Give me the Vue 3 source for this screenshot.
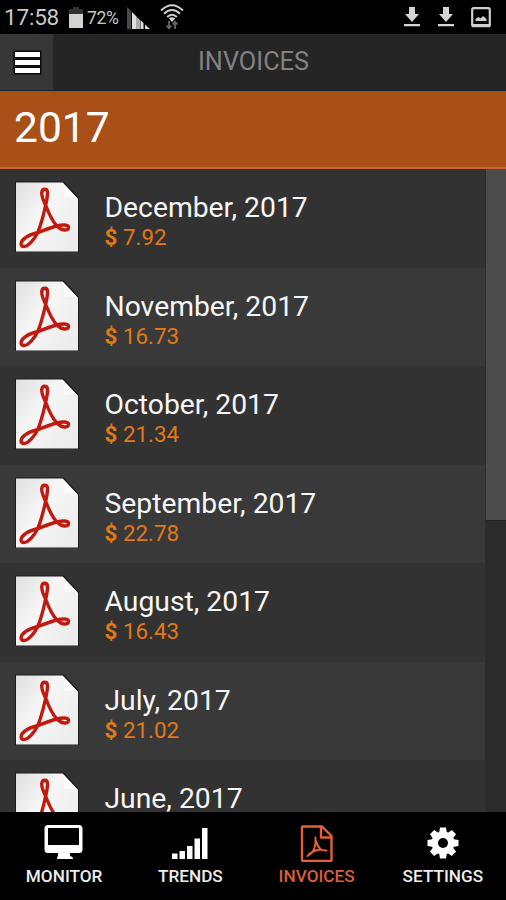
<script setup>
const invoices = [
  { month: 'December, 2017', amount: '7.92' },
  { month: 'November, 2017', amount: '16.73' },
  { month: 'October, 2017', amount: '21.34' },
  { month: 'September, 2017', amount: '22.78' },
  { month: 'August, 2017', amount: '16.43' },
  { month: 'July, 2017', amount: '21.02' },
  { month: 'June, 2017', amount: '' },
]
</script>

<template>
  <div class="phone">
    <div class="status">
      <span class="clock">17:58</span>
      <svg class="battery" width="14" height="22" viewBox="0 0 14 22">
        <path d="M4 0h6v2h4v5H0V2h4z" fill="#333" />
        <path d="M0 7h14v14H0z" fill="#d2d2d2" />
      </svg>
      <span class="percent">72%</span>
      <svg class="cell" width="23" height="22" viewBox="0 0 23 22">
        <path d="M0 0l4 4v18H0z" fill="#484848" />
        <path d="M5 5l4 4v13H5z" fill="#ddd" />
        <path d="M9 9l4 4v9H9z" fill="#aaa" />
        <path d="M13.500 13l3 3v6h-3zM18 17.500l5 4.500h-5z" fill="#ddd" />
      </svg>
      <svg class="wifi" width="24" height="26" viewBox="0 0 24 26">
        <g fill="none" stroke="#d0d0d0" stroke-width="2">
          <path d="M1 6.500q11-10.500 22 0M4 9.800q8-7.600 16 0M7.200 13q4.800-4.600 9.600 0" />
        </g>
        <path d="M8.800 14.500q3.200-2.500 6.400 0L12 18z" fill="#d0d0d0" />
        <path d="M9 17v7M6.500 21.500L9 24.300l2.300-2.800M15 25v-7M12.700 20.500L15 17.700l2.500 2.800" fill="none" stroke="#686868" stroke-width="1.800" />
      </svg>
      <span class="spacer"></span>
      <svg v-for="n in 2" :key="n" class="download" width="16" height="20" viewBox="0 0 16 20">
        <path d="M5 0h6v7h4l-7 8-7-8h4zM0 17h16v2.300H0z" fill="#d4d4d4" />
      </svg>
      <svg class="picture" width="20" height="21" viewBox="0 0 20 21">
        <rect x="1.200" y="1.200" width="17.600" height="18" rx="1.500" fill="none" stroke="#cfcfcf" stroke-width="2.200" />
        <path d="M2 17h16v2H2z" fill="#cfcfcf" />
        <path d="M4.500 14v-2l3-2 2 1.400L12 9l3.500 3v2z" fill="#cfcfcf" />
      </svg>
    </div>

    <header class="header">
      <button class="menu" aria-label="Menu"><i></i><i></i><i></i></button>
      <h1 class="title">INVOICES</h1>
    </header>

    <div class="year">2017</div>

    <div class="content">
      <div class="list">
        <div v-for="inv in invoices" :key="inv.month" class="row">
          <svg class="file" width="64" height="72" viewBox="0 0 64 72">
            <defs>
              <linearGradient id="paper" x1="0" y1="0" x2="1" y2="0.8">
                <stop offset="0" stop-color="#dfdfdf" />
                <stop offset="0.450" stop-color="#f6f6f6" />
                <stop offset="1" stop-color="#ececec" />
              </linearGradient>
            </defs>
            <path d="M0 .5h49l15 16.500v54H0z" fill="#1c1c1c" />
            <path d="M1 1.500h46.500l15.500 16.500v52.500H1z" fill="url(#paper)" />
            <path d="M47.500 1.500L63 18q-8-3-14-1 1-8-1.500-15.500z" fill="#fcfcfc" />
            <path fill="none" stroke="#c01a10" stroke-width="3.400" stroke-linejoin="round" d="M31 25C28 19 26.500 15 26.800 12C27 7 32.500 7 32.500 12C32.500 17 31.500 21 30 27C28 36 26 44 22.500 52C19 59 13 65.500 9 65.500C4.500 65.500 5.500 60 10 57C14 54 19 52.500 23 51.500C31 48.500 36 46.500 42 45C47 43.500 53.500 43.500 53.500 46.500C53.500 50 46 50 42 45C37 40 34 33 31 25z" />
          </svg>
          <div class="text">
            <div class="month">{{ inv.month }}</div>
            <div v-if="inv.amount" class="amount"><b>$</b> {{ inv.amount }}</div>
          </div>
        </div>
      </div>
      <div class="track"><div class="thumb"></div></div>
    </div>

    <nav class="tabs">
      <a class="tab">
        <svg width="40" height="38" viewBox="0 0 40 38">
          <path fill-rule="evenodd" fill="#fff" d="M4 1h31q3.500 0 3.500 3.500v21q0 3.500-3.500 3.500h-9v3q3 .5 3 3H13q0-2.500 1-3v-3H4q-3.500 0-3.500-3.500v-21Q.5 1 4 1zM4 4v17h31V4z" />
        </svg>
        <span>MONITOR</span>
      </a>
      <a class="tab">
        <svg width="40" height="38" viewBox="0 0 40 38">
          <path fill="#fff" d="M2 29.500h5.500V35H2zM9.500 27H15v8H9.500zM17 22h5.500v13H17zM24.500 14.500H30V35h-5.500zM32 4h5.500v31H32z" />
        </svg>
        <span>TRENDS</span>
      </a>
      <a class="tab active">
        <svg width="40" height="38" viewBox="0 0 40 38">
          <g fill="none" stroke="#e4603a">
            <path stroke-width="2.400" stroke-linejoin="round" d="M6 2.500h19l9.500 9.500v24q0 1-1 1H6q-1 0-1-1V3.500q0-1 1-1zM24 3v10.500h10.500" />
            <path stroke-width="2" stroke-linecap="round" stroke-linejoin="round" d="M18.500 13.500q.5 7-1.500 12-2 4-6.500 6.500M19 17q1 5 4.500 8 3 2 6 1.500M11.500 30.500q5.500-4.500 13-5" />
          </g>
        </svg>
        <span>INVOICES</span>
      </a>
      <a class="tab">
        <svg width="40" height="38" viewBox="0 0 40 38">
          <g fill="#fff" transform="translate(20 19)">
            <g v-for="a in [0, 45, 90, 135]" :key="a" :transform="`rotate(${a})`">
              <path d="M-3-15.500h6l1 6v19l-1 6h-6l-1-6v-19z" />
            </g>
            <circle r="11.500" />
            <circle r="5" fill="#000" />
          </g>
        </svg>
        <span>SETTINGS</span>
      </a>
    </nav>
  </div>
</template>

<style>
body { margin: 0; background: #000; }
</style>

<style scoped>
.phone {
  width: 506px;
  height: 900px;
  display: flex;
  flex-direction: column;
  overflow: hidden;
  background: #000;
  font-family: Roboto, "Liberation Sans", sans-serif;
}
.status {
  flex: none;
  height: 34px;
  box-sizing: border-box;
  display: flex;
  align-items: center;
  padding: 0 15px 0 4px;
  color: #c9c9c9;
}
.clock { width: 65px; font-size: 22.500px; letter-spacing: -0.2px; line-height: 34px; }
.battery { margin-top: 1px; }
.percent { width: 40px; margin-left: 4px; padding-top: 2px; font-size: 17.500px; letter-spacing: -0.3px; }
.cell { margin-top: 2px; }
.wifi { margin-left: 10px; }
.spacer { flex: 1; }
.download { margin-right: 18px; }
.download + .picture { margin-left: -1px; }
.header {
  flex: none;
  height: 57px;
  box-sizing: border-box;
  display: flex;
  background: #252525;
  border-bottom: 1px solid #142023;
}
.menu {
  width: 53px;
  border: 0;
  padding: 0 0 0 1px;
  background: #373737;
  display: flex;
  flex-direction: column;
  align-items: center;
  justify-content: center;
  gap: 3px;
}
.menu i { width: 25px; height: 5px; background: #fff; box-shadow: 0 0 0 1.500px #0b0b0b; }
.title {
  flex: 1;
  margin: 0;
  padding-right: 52px;
  text-align: center;
  font-size: 25.300px;
  font-weight: 400;
  line-height: 55px;
  color: #828282;
}
.year {
  flex: none;
  height: 78px;
  box-sizing: border-box;
  padding-left: 14px;
  background: #a94f18;
  border-bottom: 2px solid #cf6338;
  color: #fff;
  font-size: 42.500px;
  line-height: 74px;
}
.content { flex: none; height: 642.500px; display: flex; overflow: hidden; }
.list { width: 485px; border-right: 1px solid #2d2d2d; }
.row {
  height: 98.500px;
  box-sizing: border-box;
  display: flex;
  padding: 12px 0 0 15px;
  background: #323232;
}
.row:nth-child(even) { background: #393939; }
.file { flex: none; }
.text { margin-left: 25.500px; padding-top: 11px; white-space: nowrap; }
.month { font-size: 28.300px; line-height: 32px; color: #f6f6f6; }
.amount { font-size: 22.400px; line-height: 26px; color: #e17916; }
.amount b { font-weight: 700; }
.track { width: 20px; background: #2b2b2b; }
.thumb { height: 351px; background: #4c4c4c; border-bottom: 1px solid #222; }
.tabs { flex: 1; display: grid; grid-template-columns: repeat(4, 1fr); padding-left: 1px; background: #000; }
.tab {
  display: flex;
  flex-direction: column;
  align-items: center;
  padding-top: 12px;
  color: #ececec;
  font-size: 17.200px;
  font-weight: 500;
  line-height: 28px;
}
.tab.active { color: #d85f3c; }
</style>
